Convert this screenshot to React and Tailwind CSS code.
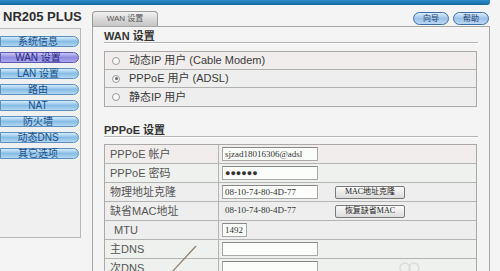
import { useState } from "react";

const font = { fontFamily: '"Liberation Sans", "Noto Sans CJK SC", sans-serif' };
const serif = { fontFamily: '"Liberation Serif", "Noto Sans CJK SC", serif' };

const menu = ["系统信息", "WAN 设置", "LAN 设置", "路由", "NAT", "防火墙", "动态DNS", "其它选项"];

function SideButton({ label, active }) {
  return (
    <div
      className={
        "h-[11px] w-[79px] rounded-r-full border flex items-center justify-center text-[10px] leading-none pr-[3px] " +
        (active
          ? "border-[#5d5ab8] bg-gradient-to-b from-[#c9c7f5] via-[#8f8ce0] to-[#a9a6ec] text-[#2a2880]"
          : "border-[#5b8fc0] bg-gradient-to-b from-[#d7eefb] via-[#86bde6] to-[#b2d7f1] text-[#1d4e87]")
      }
    >
      {label}
    </div>
  );
}

function PillButton({ label }) {
  return (
    <div className="h-[13px] w-[36px] rounded-full border border-[#3a6ea8] bg-gradient-to-b from-[#dcecfb] via-[#9cc2e8] to-[#bcd7f2] flex items-center justify-center text-[8px] leading-none text-[#1d3e6e]">
      {label}
    </div>
  );
}

function Radio({ checked }) {
  return (
    <div className="w-[8px] h-[8px] rounded-full border border-[#9a9a9a] bg-[#f8f8f8] flex items-center justify-center">
      {checked && <div className="w-[3px] h-[3px] rounded-full bg-[#666]" />}
    </div>
  );
}

function Input({ value, width = "w-[96px]", mono }) {
  return (
    <div
      className={
        width +
        " h-[14px] border border-[#a8a8a8] border-t-[#888] bg-[#fbfdfb] flex items-center px-[2px] text-[9px] leading-none text-[#333] overflow-hidden whitespace-nowrap"
      }
      style={mono ? serif : undefined}
    >
      {value}
    </div>
  );
}

function MacButton({ label }) {
  return (
    <div
      className="h-[13px] w-[70px] border border-[#7a7a7a] rounded-[2px] bg-gradient-to-b from-[#fafafa] to-[#dcdcdc] flex items-center justify-center text-[8px] leading-none text-[#222]"
      style={serif}
    >
      {label}
    </div>
  );
}

function Heading({ children }) {
  return (
    <div className="w-[374px] h-[16px] border-b border-[#b5b5b5] shadow-[0_1px_0_#ffffff] pt-[3px] text-[11px] leading-[12px] font-bold text-[#333]">
      {children}
    </div>
  );
}

export default function App() {
  const [mode, setMode] = useState("pppoe");

  const radios = [
    { key: "dhcp", label: "动态IP 用户 (Cable Modem)", bg: "bg-[#f2eded]" },
    { key: "pppoe", label: "PPPoE 用户 (ADSL)", bg: "bg-[#eeeeee]" },
    { key: "static", label: "静态IP 用户", bg: "bg-[#eeeeee]" },
  ];

  const rows = [
    { label: "PPPoE 帐户", bg: "bg-[#f2eded]", value: <Input value="sjzad18016306@adsl" mono /> },
    { label: "PPPoE 密码", bg: "bg-[#eef1ee]", value: <Input value="●●●●●●" /> },
    {
      label: "物理地址克隆",
      bg: "bg-[#eeeeee]",
      value: <Input value="08-10-74-80-4D-77" mono />,
      button: "MAC地址克隆",
    },
    {
      label: "缺省MAC地址",
      bg: "bg-[#eeeeee]",
      value: (
        <div className="w-[96px] px-[3px] text-[9px] text-[#333]" style={serif}>
          08-10-74-80-4D-77
        </div>
      ),
      button: "恢复缺省MAC",
    },
    { label: "MTU", indent: true, bg: "bg-[#eeeeee]", value: <Input value="1492" width="w-[25px]" mono /> },
    { label: "主DNS", bg: "bg-[#eef1ee]", value: <Input value="" /> },
    { label: "次DNS", bg: "bg-[#eef1ee]", value: <Input value="" /> },
  ];

  return (
    <div className="w-[500px] h-[271px] overflow-hidden bg-[#f4f4f4] relative" style={font}>
      <div className="h-[5px] w-[490px] rounded-br-[3px] bg-gradient-to-b from-[#2b8fcc] to-[#16679d]" />

      <div className="flex">
        {/* Sidebar */}
        <div className="w-[92px] shrink-0">
          <div className="h-[23px] pl-[3px] pt-[5px] text-[13px] leading-[13px] font-bold text-[#2e2e2e]">
            NR205 PLUS
          </div>
          <div className="w-[81px] h-[210px] border-t border-r border-b border-[#b8b8b8] bg-[#f0f0f0] pt-[7px] flex flex-col gap-[5px]">
            {menu.map((m) => (
              <SideButton key={m} label={m} active={m === "WAN 设置"} />
            ))}
          </div>
        </div>

        {/* Main */}
        <div className="w-[398px] shrink-0 flex flex-col">
          <div className="h-[21px] flex items-end justify-between">
            <div className="h-[15px] w-[66px] rounded-t-[4px] border border-b-0 border-[#9a9a9a] bg-gradient-to-b from-[#f2f2f2] via-[#d9d9d9] to-[#c6c6c6] flex items-center justify-center text-[8px] leading-none text-[#555]">
              WAN 设置
            </div>
            <div className="flex gap-[4px] pb-[1px] pr-[1px]">
              <PillButton label="向导" />
              <PillButton label="帮助" />
            </div>
          </div>

          <div className="h-[246px] border-t border-l border-r border-[#a6a6a6] bg-[#f4f4f4] pl-[11px]">
            <Heading>WAN 设置</Heading>

            <div className="mt-[8px] w-[373px] border border-[#a9a9a9]">
              {radios.map((r, i) => (
                <div
                  key={r.key}
                  onClick={() => setMode(r.key)}
                  className={
                    "h-[18px] flex items-center pl-[7px] gap-[9px] text-[11px] text-[#3a3a3a] " +
                    r.bg +
                    (i < radios.length - 1 ? " border-b border-[#b0b0b0]" : "")
                  }
                >
                  <Radio checked={mode === r.key} />
                  <span>{r.label}</span>
                </div>
              ))}
            </div>

            <div className="mt-[14px]">
              <Heading>PPPoE 设置</Heading>
            </div>

            <div className="mt-[7px] w-[373px] border border-[#a9a9a9]">
              {rows.map((r) => (
                <div key={r.label} className={"h-[19px] flex border-b border-[#b4b4b4] " + r.bg}>
                  <div
                    className={
                      "w-[114px] border-r border-[#b4b4b4] flex items-center text-[11px] text-[#555] " +
                      (r.indent ? "pl-[9px]" : "pl-[5px]")
                    }
                  >
                    {r.label}
                  </div>
                  <div className="flex items-center pl-[3px]">
                    {r.value}
                    {r.button && (
                      <div className="ml-[17px]">
                        <MacButton label={r.button} />
                      </div>
                    )}
                  </div>
                </div>
              ))}
            </div>
          </div>
        </div>
      </div>

      {/* annotation stroke drawn over the table */}
      <svg className="absolute left-[168px] top-[244px]" width="32" height="30" viewBox="0 0 32 30">
        <line x1="28" y1="2" x2="4" y2="28" stroke="#8c7d70" strokeWidth="1.2" />
      </svg>
      {/* faint watermark */}
      <svg className="absolute left-[398px] top-[260px]" width="24" height="14" viewBox="0 0 24 14">
        <circle cx="7" cy="8" r="5" fill="none" stroke="#dcdcdc" strokeWidth="1.5" />
        <circle cx="16" cy="8" r="5" fill="none" stroke="#dcdcdc" strokeWidth="1.5" />
      </svg>
    </div>
  );
}
